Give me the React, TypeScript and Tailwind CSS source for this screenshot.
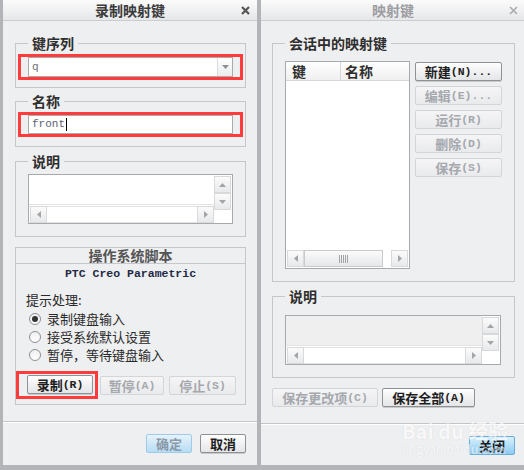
import type { ReactNode } from "react";

const mono = "font-['Liberation_Mono',monospace]";

type Dir = "up" | "down" | "left" | "right";

function Tri({ dir, color = "#a3a5a8" }: { dir: Dir; color?: string }) {
  const vertical = dir === "up" || dir === "down";
  const pts = {
    up: "0,4 7,4 3.5,0",
    down: "0,0 7,0 3.5,4",
    left: "4,0 4,7 0,3.5",
    right: "0,0 0,7 4,3.5",
  }[dir];
  return (
    <svg width={vertical ? 7 : 4} height={vertical ? 4 : 7} viewBox={vertical ? "0 0 7 4" : "0 0 4 7"}>
      <polygon points={pts} fill={color} />
    </svg>
  );
}

function ArrowBtn({ dir }: { dir: Dir }) {
  return (
    <div className="flex h-[17px] w-[17px] shrink-0 items-center justify-center border border-[#d8d9db] bg-linear-to-b from-[#fbfbfb] to-[#e8e9eb]">
      <Tri dir={dir} />
    </div>
  );
}

function TitleBar({ title, inactive }: { title: string; inactive?: boolean }) {
  return (
    <div className="flex h-[21px] shrink-0 items-center border-b border-[#cbcccf] bg-linear-to-b from-[#fbfbfb] to-[#e6e7e9]">
      <div className="w-[24px]" />
      <div
        className={`flex-1 text-center text-[14px] font-bold leading-[20px] ${
          inactive ? "text-[#9c9ea2]" : "text-[#3a3a3a]"
        }`}
      >
        {title}
      </div>
      <div className="flex w-[24px] items-center justify-center">
        <svg width="9" height="9" viewBox="0 0 9 9">
          <path
            d="M1 1 L8 8 M8 1 L1 8"
            stroke={inactive ? "#a9abae" : "#555"}
            strokeWidth={inactive ? 1.6 : 2.2}
          />
        </svg>
      </div>
    </div>
  );
}

function Btn({
  label,
  accel,
  w,
  disabled,
  tone = "plain",
}: {
  label: string;
  accel?: string;
  w: string;
  disabled?: boolean;
  tone?: "plain" | "blue" | "blueOff";
}) {
  const look =
    tone === "blue"
      ? "border-[#69acd8] from-[#d9f0fd] to-[#8dcbf2] text-[#1c1c1c]"
      : tone === "blueOff"
        ? "border-[#9fcbe8] from-[#e6f3fc] to-[#b8dcf4] text-[#8a9aa8]"
        : disabled
          ? "border-[#d4d5d8] from-[#f5f5f6] to-[#e9eaec] text-[#a5a8ad]"
          : "border-[#8f9194] from-[#fefefe] to-[#e4e5e7] text-[#1e1e1e] shadow-[0_1px_0_#c9cacc]";
  return (
    <div
      className={`flex h-[19px] shrink-0 items-center justify-center rounded-[2px] border bg-linear-to-b text-[13px] font-bold leading-[17px] ${look} ${w}`}
    >
      <span>{label}</span>
      {accel && <span className={`${mono} text-[11.5px]`}>{accel}</span>}
    </div>
  );
}

function Group({
  label,
  pad,
  legendMl,
  className = "",
  children,
}: {
  label: string;
  pad: string;
  legendMl: string;
  className?: string;
  children: ReactNode;
}) {
  return (
    <fieldset className={`border border-[#c6c7ca] ${pad} ${className}`}>
      <legend className={`${legendMl} px-[4px] text-[14px] font-bold leading-[16px] text-[#2e2e2e]`}>{label}</legend>
      {children}
    </fieldset>
  );
}

function TextBox({ w, gray }: { w: string; gray?: boolean }) {
  return (
    <div className={`flex h-[50px] border border-[#a7a9ac] bg-white ${w}`}>
      <div className="flex flex-1 flex-col">
        <div className={`flex-1 ${gray ? "bg-[#efeff0]" : ""}`} />
        <div className="flex h-[19px] items-center border-t border-[#e2e3e5] pl-[1px]">
          <ArrowBtn dir="left" />
          <div className="h-[17px] flex-1 border-y border-[#e2e3e5] bg-white" />
          <ArrowBtn dir="right" />
        </div>
      </div>
      <div className="flex w-[18px] flex-col pt-[1px] pr-[1px]">
        <ArrowBtn dir="up" />
        <ArrowBtn dir="down" />
        <div className="flex-1" />
      </div>
    </div>
  );
}

function Radio({ on, label }: { on?: boolean; label: string }) {
  return (
    <div className="flex h-[18px] items-center gap-[6px] pl-[13px]">
      <div className="flex h-[12px] w-[12px] items-center justify-center rounded-full border border-[#8c8e92] bg-linear-to-b from-[#f0f0f0] to-white">
        {on && <div className="h-[6px] w-[6px] rounded-full bg-[#333]" />}
      </div>
      <span className="text-[13px] leading-[16px] text-[#2a2a2a]">{label}</span>
    </div>
  );
}

function Separator() {
  return <div className="mt-[16px] h-[2px] border-t border-[#c4c5c8] bg-white" />;
}

function RecordWindow() {
  return (
    <div className="flex h-[470px] w-[259px] shrink-0 flex-col border-l-[3px] border-r-[2px] border-b-[5px] border-[#b3b4b7] bg-[#eeeff1]">
      <TitleBar title="录制映射键" />
      <div className="flex flex-col pl-[12px] pr-[11px]">
        <Group label="键序列" pad="px-[2px] pb-[7px]" legendMl="ml-[10px]" className="mt-[14px]">
          <div className="mt-[3px] border-[3px] border-[#ff3b3b] px-[7px]">
            <div className="flex h-[20px] border border-[#a9abae] bg-white">
              <div className={`flex-1 pl-[3px] ${mono} text-[11px] leading-[18px] text-[#6a6f78]`}>q</div>
              <div className="flex w-[15px] items-center justify-center border-l border-[#dcdde0] bg-linear-to-b from-white to-[#ebeced]">
                <Tri dir="down" color="#8d9095" />
              </div>
            </div>
          </div>
        </Group>

        <Group label="名称" pad="px-[2px] pb-[9px]" legendMl="ml-[10px]" className="mt-[5px]">
          <div className="mt-[3px] border-[3px] border-[#ff3b3b] px-[7px]">
            <div className="flex h-[19px] items-center border border-[#a9abae] bg-white pl-[3px]">
              <span className={`${mono} text-[11px] leading-[17px] text-[#5a6272]`}>front</span>
              <span className="ml-[1px] h-[13px] w-[1px] bg-black" />
            </div>
          </div>
        </Group>

        <Group label="说明" pad="px-[12px] pb-[12px]" legendMl="ml-0" className="mt-[6px]">
          <div className="mt-[5px]">
            <TextBox w="w-[205px]" />
          </div>
        </Group>

        <div className="mt-[10px] border border-[#c6c7ca] pb-[5px]">
          <div className="h-[16px] border-b border-[#c6c7ca] text-center text-[14px] font-bold leading-[15px] text-[#555]">
            操作系统脚本
          </div>
          <div className={`mt-[2px] text-center ${mono} text-[11.5px] font-bold leading-[16px] text-[#1f2a44]`}>
            PTC Creo Parametric
          </div>
          <div className="mt-[10px] pl-[10px] text-[13px] leading-[16px] text-[#2a2a2a]">提示处理:</div>
          <div className="mt-[2px] flex flex-col">
            <Radio on label="录制键盘输入" />
            <Radio label="接受系统默认设置" />
            <Radio label="暂停，等待键盘输入" />
          </div>
          <div className="mt-[7px] flex items-center">
            <div className="border-[3px] border-[#ff3b3b] pt-[1px] pb-[2px] pl-[8px] pr-[2px]">
              <Btn label="录制" accel="(R)" w="w-[66px]" />
            </div>
            <div className="ml-[2px]">
              <Btn label="暂停" accel="(A)" w="w-[64px]" disabled />
            </div>
            <div className="ml-[5px]">
              <Btn label="停止" accel="(S)" w="w-[67px]" disabled />
            </div>
          </div>
        </div>
      </div>
      <Separator />
      <div className="mt-[11px] flex justify-end gap-[8px] pr-[11px]">
        <Btn label="确定" w="w-[46px]" tone="blueOff" />
        <Btn label="取消" w="w-[46px]" />
      </div>
    </div>
  );
}

function MapWindow() {
  return (
    <div className="flex h-[470px] flex-1 flex-col border-l-[2px] border-b-[5px] border-[#b3b4b7] bg-[#eeeff1]">
      <TitleBar title="映射键" inactive />
      <div className="flex flex-col pl-[11px] pr-[10px]">
        <Group label="会话中的映射键" pad="px-[12px] pb-[12px]" legendMl="ml-0" className="mt-[14px]">
          <div className="mt-[10px] flex gap-[5px]">
            <div className="flex h-[208px] w-[125px] flex-col border border-[#a7a9ac] bg-white">
              <div className="flex h-[19px] border-b border-[#d6d7d9] bg-linear-to-b from-white to-[#efeff0] text-[14px] font-bold leading-[18px] text-[#2e2e2e]">
                <div className="w-[55px] border-r border-[#d6d7d9] pl-[6px]">键</div>
                <div className="pl-[4px]">名称</div>
              </div>
              <div className="flex-1" />
              <div className="flex h-[19px] items-center px-[1px]">
                <ArrowBtn dir="left" />
                <div className="flex h-[17px] w-[79px] items-center justify-center border border-[#c9cacd] bg-linear-to-b from-[#fbfbfb] to-[#e6e7e9]">
                  <svg width="9" height="8" viewBox="0 0 9 8">
                    <path d="M0.5 0 V8 M2.5 0 V8 M4.5 0 V8 M6.5 0 V8 M8.5 0 V8" stroke="#a2a4a8" strokeWidth="1" />
                  </svg>
                </div>
                <div className="flex-1" />
                <ArrowBtn dir="right" />
              </div>
            </div>
            <div className="mt-[1px] flex flex-col gap-[5px]">
              <Btn label="新建" accel="(N)..." w="w-[87px]" />
              <Btn label="编辑" accel="(E)..." w="w-[87px]" disabled />
              <Btn label="运行" accel="(R)" w="w-[87px]" disabled />
              <Btn label="删除" accel="(D)" w="w-[87px]" disabled />
              <Btn label="保存" accel="(S)" w="w-[87px]" disabled />
            </div>
          </div>
        </Group>

        <Group label="说明" pad="px-[12px] pb-[12px]" legendMl="ml-0" className="mt-[6px]">
          <div className="mt-[11px]">
            <TextBox w="w-[216px]" gray />
          </div>
        </Group>

        <div className="mt-[10px] flex gap-[4px]">
          <Btn label="保存更改项" accel="(C)" w="w-[106px]" disabled />
          <Btn label="保存全部" accel="(A)" w="w-[93px]" />
        </div>
      </div>
      <Separator />
      <div className="mt-[11px] flex justify-end pr-[10px]">
        <Btn label="关闭" w="w-[46px]" tone="blue" />
      </div>
    </div>
  );
}

export default function App() {
  return (
    <div className="relative flex h-[470px] w-[524px] overflow-hidden bg-[#c9cacc] font-['Noto_Sans_CJK_SC','Noto_Sans',sans-serif]">
      <RecordWindow />
      <MapWindow />
      {/* faint watermark over the bottom right corner */}
      <div className="pointer-events-none absolute left-[402px] top-[420px] flex flex-col items-start whitespace-nowrap opacity-60">
        <span className="text-[20px] font-bold leading-[22px] text-white [text-shadow:0_0_1px_#c2c4c8]">Bai du 经验</span>
        <span className="text-[12px] leading-[14px] text-white [text-shadow:0_0_1px_#c2c4c8]">jingyan.baidu.com</span>
      </div>
    </div>
  );
}
